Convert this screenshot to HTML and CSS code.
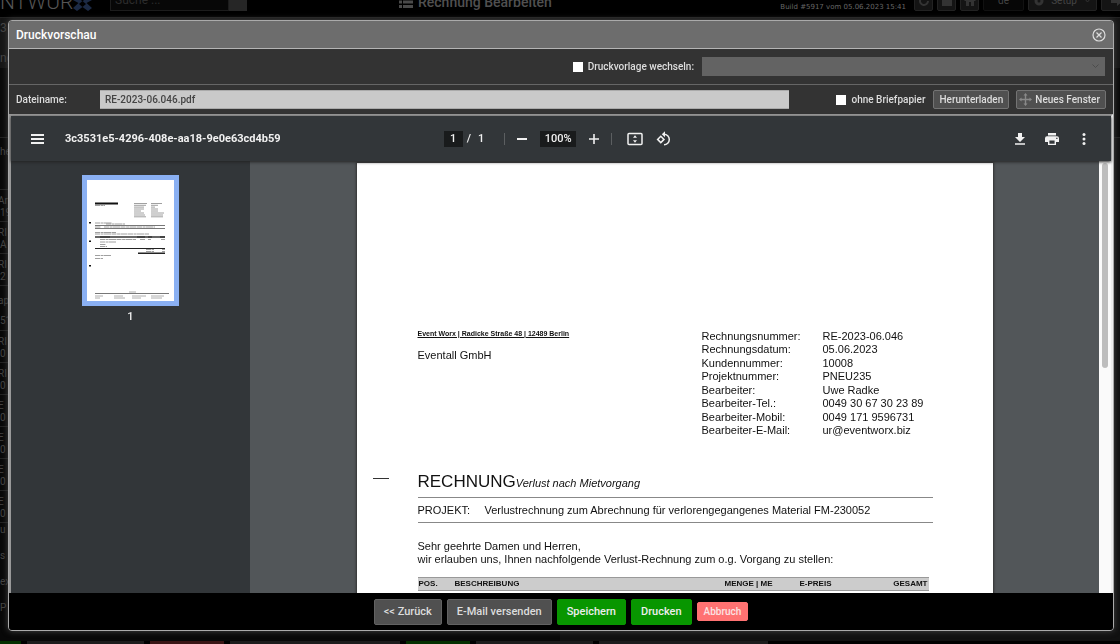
FILE: index.html
```html
<!DOCTYPE html>
<html lang="de">
<head>
<meta charset="utf-8">
<title>Druckvorschau</title>
<link rel="stylesheet" href="styles.css">
</head>
<body>
<div class="app">
  <header class="app-header">
    <div class="brand">NTWUR<svg width="19" height="20" viewBox="0 0 19 20" fill="#1c2a45"><path d="M4 5l5.500 5.500L15 5l4 4-5.500 3L19 17l-4 3-5.500-4L4 20l-4-3 5.500-5L0 9z"/><path d="M6 13l3.500-3 3.500 3-3.500 3z" fill="#000"/></svg></div>
    <input class="app-search" type="text" placeholder="Suche ..." aria-label="Suche">
    <button class="app-search-go" aria-label="Suchen"></button>
    <div class="app-title"><svg width="14" height="12" viewBox="0 0 14 12" fill="#4a4a4a"><path d="M0 0h3v3H0zM4 0h10v3H4zM0 4.500h3v3H0zM4 4.500h10v3H4zM0 9h3v3H0zM4 9h10v3H4z"/></svg>Rechnung Bearbeiten</div>
    <div class="app-build">Build #5917 vom 05.06.2023 15:41</div>
    <div class="app-tools">
      <button aria-label="Aktualisieren"><svg width="12" height="12" viewBox="0 0 12 12" fill="none" stroke="#333" stroke-width="2"><path d="M10 6a4 4 0 1 1-2-3.500"/></svg></button>
      <button aria-label="Nachrichten"><svg width="12" height="12" viewBox="0 0 12 12" fill="#333"><path d="M1 4l5-3 5 3v7H1z"/></svg></button>
      <button aria-label="Start"><svg width="12" height="12" viewBox="0 0 12 12" fill="#333"><path d="M6 0l6 6h-2v5H7V7H5v4H2V6H0z"/></svg></button>
      <button class="lang">de</button>
      <button class="setup"><svg width="10" height="10" viewBox="0 0 10 10" fill="none" stroke="#333" stroke-width="3"><circle cx="5" cy="5" r="3"/></svg>Setup<svg width="7" height="5" viewBox="0 0 7 5" fill="none" stroke="#333"><path d="M0 0l3.500 4L7 0"/></svg></button>
      <button class="logout" aria-label="Abmelden"><svg width="12" height="12" viewBox="0 0 12 12" fill="#333"><path d="M0 4h6V1l6 5-6 5V8H0z"/></svg></button>
    </div>
  </header>
  <main class="app-body">
    <div class="app-panel"><span>3</span><span>ng</span></div>
    <div class="app-filter"></div>
    <div class="app-listhead">he</div>
    <ul class="app-list">
      <li>Ar<br>19</li><li>RI<br>A</li><li>RI<br>2 I</li><li class="tall">ap<br>51</li><li>RI<br>0</li><li>RI<br>0</li><li>E<br>0</li><li>E<br>0</li><li>E<br>0</li><li>E<br>0</li>
    </ul>
    <div class="app-notes"><span>u</span><span>s</span><span>ex</span><span>P</span></div>
  </main>
  <footer class="app-footer"><i class="ok w1"></i><i class="w4"></i><i class="bad w3"></i><i class="w5"></i><i class="ok w2"></i><i class="w4"></i><i class="w5"></i><i class="w5 none"></i><i class="w5 none"></i></footer>
</div>

<section class="dialog" role="dialog" aria-labelledby="dialog-title">
  <header class="dialog-title">
    <h1 id="dialog-title">Druckvorschau</h1>
    <button class="close" aria-label="Schließen"><svg width="14" height="14" viewBox="0 0 14 14" fill="none" stroke="#ddd" stroke-width="1.200"><circle cx="7" cy="7" r="6"/><path d="M4.500 4.500l5 5M9.500 4.500l-5 5"/></svg></button>
  </header>
  <div class="bar bar-template">
    <label class="check"><input type="checkbox">Druckvorlage wechseln:</label>
    <div class="select-wrap">
      <select aria-label="Druckvorlage" disabled><option></option></select>
      <svg width="7" height="5" viewBox="0 0 7 5" fill="none" stroke="#4c4c4c"><path d="M0.500 0.500l3 3 3-3"/></svg>
    </div>
  </div>
  <div class="bar bar-file">
    <label class="file-label" for="file">Dateiname:</label>
    <input class="file" id="file" type="text" value="RE-2023-06.046.pdf">
    <label class="check check-paper"><input type="checkbox">ohne Briefpapier</label>
    <button class="small">Herunterladen</button>
    <button class="small"><svg width="13" height="13" viewBox="0 0 13 13" fill="#898989"><path d="M6.500 0l2 2.500H7.200v3.300h3.300V4.500l2.500 2-2.500 2V7.200H7.200v3.300h1.300l-2 2.500-2-2.500h1.300V7.200H2.500v1.300l-2.500-2 2.500-2v1.300h3.300V2.500H4.500z"/></svg>Neues Fenster</button>
  </div>

  <div class="viewer">
    <div class="pdf-bar">
      <div class="pdf-name">
        <button aria-label="Menü"><svg width="14" height="10" viewBox="0 0 14 10" fill="#f1f1f1"><path d="M0 0h13v2H0zM0 4h13v2H0zM0 8h13v2H0z"/></svg></button>
        <strong>3c3531e5-4296-408e-aa18-9e0e63cd4b59</strong>
      </div>
      <div class="pdf-mid">
        <input class="page-no" type="text" value="1" aria-label="Seite">
        <span class="page-of">/</span><span>1</span>
        <i class="sep sep-first"></i>
        <button aria-label="Verkleinern"><svg width="12" height="12" viewBox="0 0 12 12" fill="#f1f1f1"><path d="M1 5h10v2H1z"/></svg></button>
        <input class="zoom" type="text" value="100%" aria-label="Zoom">
        <button aria-label="Vergrößern"><svg width="12" height="12" viewBox="0 0 12 12" fill="#f1f1f1"><path d="M1 5.200h4.200V1h1.600v4.200H11v1.600H6.800V11H5.200V6.800H1z"/></svg></button>
        <i class="sep"></i>
        <button class="fit" aria-label="An Seite anpassen"><svg width="16" height="14" viewBox="0 0 16 14"><rect x="1" y="1.500" width="14" height="11" rx="1" fill="none" stroke="#f1f1f1" stroke-width="1.500"/><path d="M8 3.300l2 2.400H6zM8 10.700l2-2.400H6z" fill="#f1f1f1"/></svg></button>
        <button class="rotate" aria-label="Drehen"><svg width="16" height="16" viewBox="0 0 16 16" fill="none" stroke="#f1f1f1" stroke-width="1.500"><path d="M4.800 5.200L8 8.400l-3.200 3.200L1.600 8.400z"/><path d="M8 3.200a5.300 5.300 0 1 1 0 10.600"/><path d="M9 .2v6L5.800 3.200z" fill="#f1f1f1" stroke="none"/></svg></button>
      </div>
      <div class="pdf-actions">
        <button aria-label="Herunterladen"><svg width="14" height="14" viewBox="0 0 14 14" fill="#f1f1f1"><path d="M5 1h4v4h3L7 10 2 5h3zM2 11.200h10v1.600H2z"/></svg></button>
        <button aria-label="Drucken"><svg width="14" height="14" viewBox="0 0 14 14" fill="#f1f1f1"><path d="M3 1h8v2.500H3z"/><path fill-rule="evenodd" d="M2 4.200h10a2 2 0 0 1 2 2V10h-3v3H3v-3H0V6.200a2 2 0 0 1 2-2zM4.400 8.500v3.200h5.200V8.500zM11.200 5.800v1.300h1.300V5.800z"/></svg></button>
        <button aria-label="Mehr"><svg width="14" height="14" viewBox="0 0 14 14" fill="#f1f1f1"><circle cx="7" cy="2.500" r="1.500"/><circle cx="7" cy="7" r="1.500"/><circle cx="7" cy="11.500" r="1.500"/></svg></button>
      </div>
    </div>
    <div class="pdf-body">
      <aside class="thumbs">
        <svg class="thumb" width="97" height="131" viewBox="0 0 97 131">
          <path fill="#8ab0f3" d="M0 0h97v131H0z"/><path fill="#fff" d="M5 5h87v121H5z"/>
          <path fill="#111" d="M13 27.500h23v2H13zM7 47h2v1.500H7zM7 65.500h2V67H7zM7 90h2v1.500H7z"/>
          <path fill="#777" d="M13 50h70v1H13zM13 53h70v1H13z"/>
          <path fill="#666" d="M13 61h70v2H13z"/><path fill="#222" d="M18 61.500h10v1H18zM55 61.500h8v1h-8zM66 61.500h4v1h-4zM78 61.500h5v1h-5zM13 73h70v1H13zM56 77.500h27v1.500H56z"/>
          <path fill="none" stroke="#888" stroke-width=".8" stroke-dasharray="5 .6 3 .4 7 .5" d="M13 30.500h10M13 48h17M24 49h19M13 52h6M22 52h51M13 57.500h21M13 59h54M18 64.500h36M58 64.500h5M66 64.500h3M79 64.500h4M18 67h16M18 69.500h6M18 71.500h7M64 74.500h8M80 74.500h3M64 76.500h8M80 76.500h3M13 80.500h16M13 83.500h8"/>
          <path fill="none" stroke="#888" stroke-width=".8" d="M52 28.500h13M52 30.300h12M52 32.100h10M52 34h10M52 36h7M52 38h10M52 40h11M52 41.800h12M69 28.500h11M69 30.300h7M69 32.100h4M69 34h7M69 36h7M69 38h13M69 40h12M69 41.800h12"/>
          <path fill="#777" d="M13 118h74v1H13z"/>
          <path fill="none" stroke="#999" stroke-width=".8" d="M13 121h8M13 123h5M32 121h9M32 123h11M50 121h14M50 123h9M69 121h13M69 123h11M47 117h7"/>
        </svg>
        <span>1</span>
      </aside>
      <div class="canvas">
        <article class="paper">
          <div class="address">
            <div>
              <p class="sender">Event Worx | Radicke Straße 48 | 12489 Berlin</p>
              <p class="recipient">Eventall GmbH</p>
            </div>
            <dl class="facts">
              <dt>Rechnungsnummer:</dt><dd>RE-2023-06.046</dd>
              <dt>Rechnungsdatum:</dt><dd>05.06.2023</dd>
              <dt>Kundennummer:</dt><dd>10008</dd>
              <dt>Projektnummer:</dt><dd>PNEU235</dd>
              <dt>Bearbeiter:</dt><dd>Uwe Radke</dd>
              <dt>Bearbeiter-Tel.:</dt><dd>0049 30 67 30 23 89</dd>
              <dt>Bearbeiter-Mobil:</dt><dd>0049 171 9596731</dd>
              <dt>Bearbeiter-E-Mail:</dt><dd>ur@eventworx.biz</dd>
            </dl>
          </div>
          <div class="heading"><i class="fold"></i><h2>RECHNUNG</h2><em>Verlust nach Mietvorgang</em></div>
          <div class="project"><span>PROJEKT:</span><span>Verlustrechnung zum Abrechnung für verlorengegangenes Material FM-230052</span></div>
          <p class="intro">Sehr geehrte Damen und Herren,<br>wir erlauben uns, Ihnen nachfolgende Verlust-Rechnung zum o.g. Vorgang zu stellen:</p>
          <table class="items">
            <thead><tr><th class="pos">POS.</th><th>BESCHREIBUNG</th><th class="qty">MENGE | ME</th><th class="price">E-PREIS</th><th class="sum">GESAMT</th></tr></thead>
          </table>
        </article>
      </div>
      <div class="scroll"><i></i></div>
    </div>
  </div>

  <footer class="actions">
    <button>&lt;&lt; Zurück</button>
    <button>E-Mail versenden</button>
    <button class="go">Speichern</button>
    <button class="go">Drucken</button>
    <button class="cancel">Abbruch</button>
  </footer>
</section>
</body>
</html>
```
FILE: styles.css
```css
* { box-sizing: border-box; }
body { margin: 0; height: 100vh; overflow: hidden; background: #000; font-family: Roboto, sans-serif; font-size: 12px; color: #ddd; }
button, input, select { font: inherit; color: inherit; margin: 0; }
button { border: 0; padding: 0; background: none; display: flex; align-items: center; justify-content: center; }
h1, h2, p, dl, dd, ul { margin: 0; padding: 0; }
svg { display: block; flex: none; }

/* Page behind the dialog */
.app { height: 100%; display: flex; flex-direction: column; color: #444; }
.app-header { height: 18px; padding-bottom: 6px; border-bottom: 1px solid #222; display: flex; align-items: flex-end; overflow: hidden; flex: none; }
.brand { width: 110px; display: flex; align-items: flex-end; font-size: 21px; font-weight: 300; line-height: 18px; color: #555; }
.app-search { width: 119px; height: 20px; border: 1px solid #1c1c1c; background: #070707; padding: 0 4px 2px; flex: none; }
.app-search::placeholder { color: #2c2c2c; }
.app-search-go { width: 18px; height: 20px; background: #262626; flex: none; }
.app-title { display: flex; align-items: center; gap: 5px; margin-left: 152px; font-size: 14px; font-weight: 500; line-height: 18px; color: #505050; white-space: nowrap; }
.app-build { margin-left: auto; font-family: "DejaVu Sans", sans-serif; font-size: 7px; line-height: 7px; color: #666; white-space: nowrap; }
.app-tools { display: flex; gap: 4px; margin: 0 -13px 0 8px; flex: none; }
.app-tools button { width: 19px; height: 20px; background: #141414; border: 1px solid #222; border-radius: 2px; font-size: 10px; padding-bottom: 1px; }
.app-tools .lang { width: 41px; background: #060606; border-color: #111; }
.app-tools .setup { width: 69px; gap: 7px; }
.app-tools .logout { width: 32px; }
.app-body { flex: 1; min-height: 0; background: linear-gradient(90deg, #080808 50%, #111 50%); }
.app-panel { height: 50px; padding-top: 2px; background: #161616; display: flex; flex-direction: column; gap: 14px; line-height: 16px; }
.app-filter { height: 70px; background: #0a0a0a; border-bottom: 1px solid #222; }
.app-listhead { height: 52px; padding-top: 8px; border-bottom: 1px solid #222; width: 8px; font-size: 10px; }
.app-list { list-style: none; font-size: 10px; line-height: 12px; width: 10px; white-space: nowrap; overflow: hidden; }
.app-list li { height: 32px; padding-top: 5px; border-bottom: 1px solid #222; text-indent: -2px; }
.app-list .tall { height: 45px; line-height: 20px; }
.app-notes { display: flex; flex-direction: column; gap: 12px; line-height: 14px; font-size: 10px; }
.app-footer { height: 3px; display: flex; gap: 6px; flex: none; }
.app-footer i { background: #1c1c1c; }
.app-footer .ok { background: #042f00; }
.app-footer .bad { background: #3a1515; }
.app-footer .none { background: #000; }
.w1 { flex: 2; } .w2 { flex: 6; } .w3 { flex: 7; } .w4 { flex: 11; } .w5 { flex: 16; }

/* Dialog */
.dialog { position: fixed; inset: 20px 6px 13px 8px; display: flex; flex-direction: column; background: #333; border: 1px solid #aaa; border-radius: 4px; overflow: hidden; box-shadow: 0 0 6px #444; }
.dialog-title { height: 28px; padding: 0 7px; display: flex; align-items: center; justify-content: space-between; background: #6d6d6d; border-bottom: 1px solid #b5b5b5; flex: none; }
.dialog-title h1 { font-size: 12px; font-weight: 500; color: #fff; }
.bar { display: flex; align-items: center; padding: 0 7px; font-size: 10px; font-weight: 500; flex: none; }
.bar-template { height: 36px; border-bottom: 1px solid #666; justify-content: flex-end; gap: 8px; padding-right: 8px; }
.bar-file { height: 29px; gap: 7px; }
.check { display: flex; align-items: center; gap: 5px; white-space: nowrap; }
.check input { appearance: none; width: 10px; height: 10px; background: #fff; }
.select-wrap { display: grid; align-items: center; width: 37%; }
.select-wrap > * { grid-area: 1 / 1; }
.select-wrap select { appearance: none; width: 100%; height: 19px; background: #636363; border: 0; border-radius: 0; opacity: 1; }
.select-wrap svg { justify-self: end; margin-right: 6px; }
.file-label { width: 77px; flex: none; }
.file { flex: 1; min-width: 0; height: 19px; padding: 0 5px; border: 1px solid #aaa; border-width: 1px 0; background: #c9c9c9; color: #444; }
.check-paper { margin: 0 1px 0 40px; }
.small { height: 19px; padding: 0 5px; gap: 3px; background: #505050; border: 1px solid #737373; border-radius: 2px; white-space: nowrap; }
.small svg { margin-left: -3px; }

/* Document viewer */
.viewer { flex: 1; min-height: 0; display: flex; flex-direction: column; border: 2px solid #999; border-right-color: #eee; border-bottom: 0; background: #323639; color: #f1f1f1; }
.pdf-bar { height: 45px; display: grid; grid-template-columns: 1fr auto 1fr; align-items: center; font-size: 11px; font-weight: 500; flex: none; box-shadow: 0 1px 3px #222; position: relative; z-index: 1; }
.pdf-name { display: flex; align-items: center; gap: 20px; padding-left: 20px; }
.pdf-name strong { font-weight: 700; }
.pdf-mid { display: flex; align-items: center; margin-right: 6px; }
.pdf-mid input { height: 16px; padding: 0; border: 0; background: #191b1c; text-align: center; }
.page-no { width: 19px; }
.page-of { margin: 0 7px 0 4px; }
.zoom { width: 36px; margin: 0 12px; }
.sep { width: 1px; height: 12px; background: #5c5f61; margin: 0 11px; }
.sep-first { margin-left: 20px; }
.fit { margin-left: 4px; }
.rotate { margin-left: 13px; }
.pdf-actions { display: flex; justify-content: flex-end; gap: 18px; padding-right: 20px; }
.pdf-body { flex: 1; min-height: 0; display: flex; }
.thumbs { width: 239px; padding-top: 14px; display: flex; flex-direction: column; align-items: center; gap: 4px; flex: none; font-size: 11px; font-weight: 500; }
.canvas { flex: 1; min-width: 0; padding-top: 2px; background: #525659; display: flex; justify-content: center; overflow: hidden; }
.scroll { width: 12px; padding: 2px 3px; background: #fafafa; flex: none; }
.scroll i { display: block; width: 6px; height: 48%; border-radius: 3px; background: #bdbdbd; }
.paper { width: 636px; height: 900px; padding: 165px 60px 0 61px; background: #fff; color: #111; font-family: "Liberation Sans", Arial, sans-serif; font-size: 11px; line-height: 13px; box-shadow: 0 0 2px 1px #333; flex: none; }
.address { display: grid; grid-template-columns: 284px 1fr; }
.sender { font-size: 7px; line-height: 11px; font-weight: 700; text-decoration: underline; }
.recipient { margin-top: 10px; }
.facts { display: grid; grid-template-columns: 121px 1fr; grid-template-rows: repeat(4, 13px 14px); padding-top: 2px; }
.heading { display: flex; align-items: baseline; margin-top: 34px; height: 25px; line-height: 20px; }
.heading h2 { font-size: 17px; font-weight: 400; }
.fold { align-self: flex-start; width: 16px; height: 1px; margin: 6px 29px 0 -45px; background: #333; }
.project { display: grid; grid-template-columns: 67px 1fr; height: 26px; align-items: center; border: 1px solid #888; border-width: 1px 0; white-space: nowrap; }
.intro { margin-top: 17px; line-height: 13px; }
.items { width: 511px; margin-top: 11px; border-collapse: collapse; background: #ccc; font-size: 8px; line-height: 12px; table-layout: fixed; }
.items th { padding: 0 1px; text-align: left; border: 0 solid #999; border-width: 1px 0; white-space: nowrap; }
.items .pos { width: 36px; } .items .qty { width: 75px; } .items .price { width: 80px; } .items .sum { width: 50px; text-align: right; }

/* Dialog actions */
.actions { height: 37px; display: flex; align-items: center; justify-content: center; gap: 5px; background: #000; flex: none; }
.actions button { height: 26px; padding: 0 9px; background: #505050; border: 1px solid #626262; border-radius: 2px; font-size: 11px; font-weight: 500; color: #ddd; }
.actions .go { background: #089600; border-color: #089600; color: #eee; }
.actions .cancel { height: 19px; padding: 0 6px; background: #ff7272; border-color: #ff7272; font-size: 10px; color: #fbe3e3; }
```
